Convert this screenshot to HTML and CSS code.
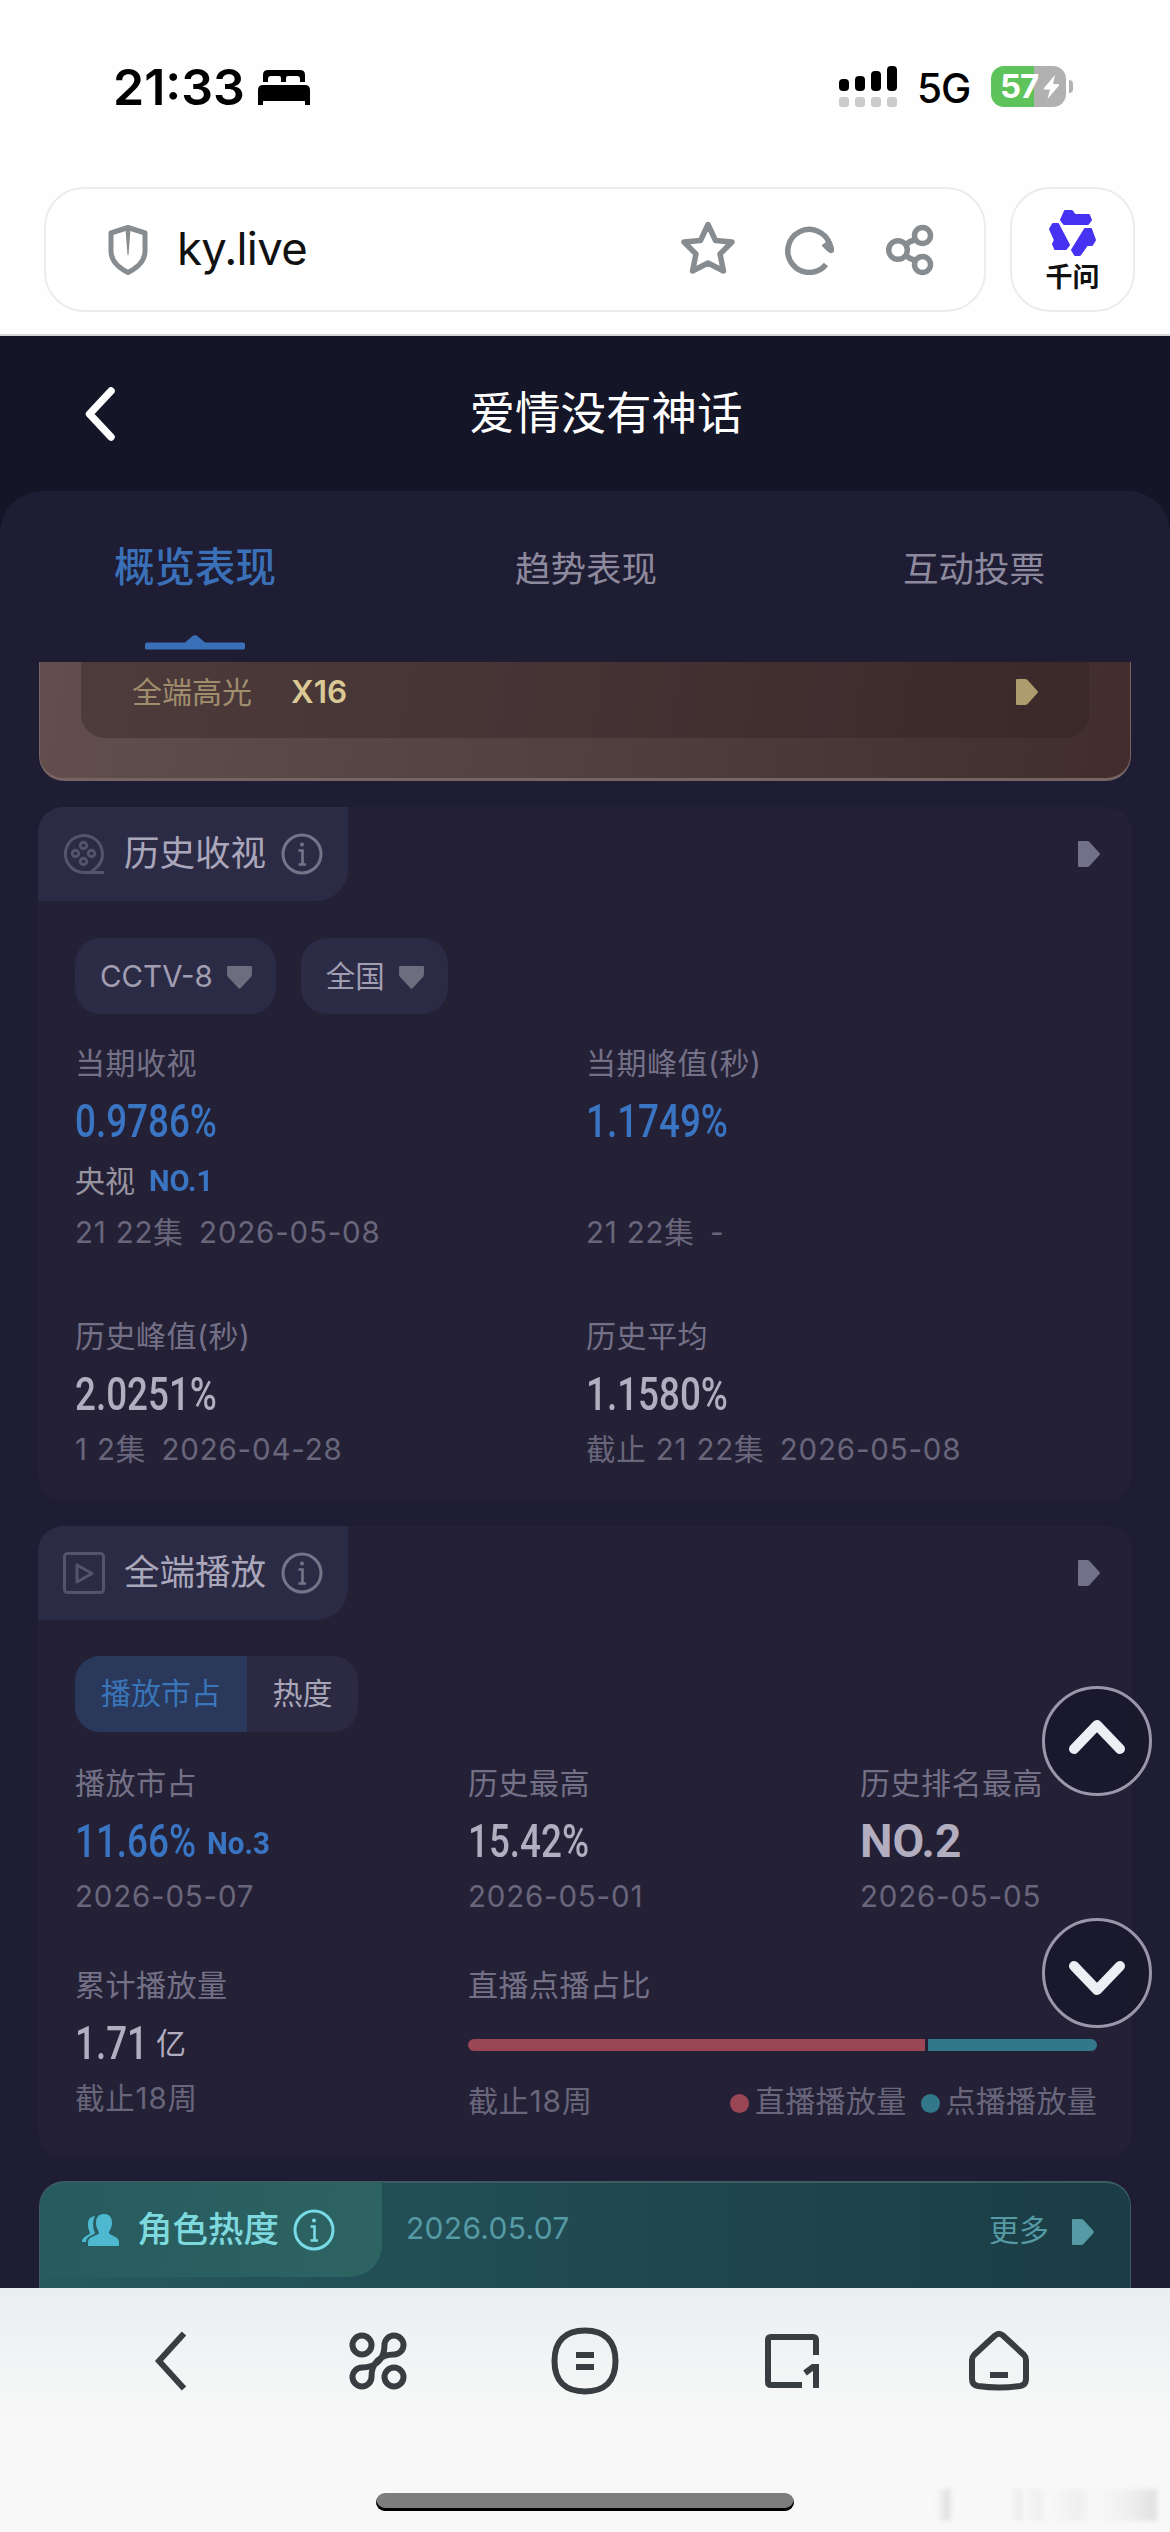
FILE: index.html
```html
<!DOCTYPE html>
<html lang="zh-CN">
<head>
<meta charset="utf-8">
<title>爱情没有神话</title>
<link rel="stylesheet" href="styles.css">
</head>
<body>
<svg class="defs" width="0" height="0">
  <symbol id="arrow" viewBox="0 0 22 26"><path d="M1 0H9Q10.500 0 11.500 1L21.500 12Q22.300 13 21.500 14L11.500 25Q10.500 26 9 26H1Q0 26 0 25V1Q0 0 1 0Z" fill="currentColor"/></symbol>
  <symbol id="down" viewBox="0 0 26 24"><path d="M1 0H25Q26 0 26 1V8Q26 10 25 11.500L14 23.300Q13 24 12 23.300L1 11.500Q0 10 0 8V1Q0 0 1 0Z" fill="currentColor"/></symbol>
  <symbol id="info" viewBox="0 0 42 42"><circle cx="21" cy="21" r="19" fill="none" stroke="currentColor" stroke-width="3"/><circle cx="21" cy="11.500" r="2" fill="currentColor"/><path d="M17.500 17.500H21.500V31M17.500 31.500H25" fill="none" stroke="currentColor" stroke-width="2.600"/></symbol>
</svg>

<header class="status">
  <div class="clock">21:33</div>
  <svg class="bed" width="52" height="36" viewBox="0 0 52 36"><path d="M5 12V5Q5 0 10 0H42Q47 0 47 5V12H42V9Q42 6 39 6H30Q28 6 28 8V12H23V8Q23 6 21 6H13Q10 6 10 9V12Z"/><path d="M0 35V20Q0 15 5 15H47Q52 15 52 20V35H47V31H5V35Z"/></svg>
  <svg class="signal" width="58" height="41" viewBox="0 0 58 41"><g fill="#000"><rect y="13" width="10" height="12" rx="4"/><rect x="16" y="10" width="10" height="15" rx="4"/><rect x="32" y="5" width="10" height="20" rx="4"/><rect x="48" width="10" height="25" rx="4"/></g><g fill="#cbcbcb"><rect y="31" width="10" height="10" rx="3"/><rect x="16" y="31" width="10" height="10" rx="3"/><rect x="32" y="31" width="10" height="10" rx="3"/><rect x="48" y="31" width="10" height="10" rx="3"/></g></svg>
  <div class="net">5G</div>
  <div class="battery"><span>57</span><svg width="17" height="26" viewBox="0 0 17 26"><path d="M12 1L1 14Q0 15.500 2 15.500H7L4.500 25L16 11.500Q17 10 15 10H10L12 1Z" fill="#fff"/></svg></div>
  <i class="nub"></i>
</header>

<div class="address">
  <div class="urlbox">
    <svg width="40" height="52" viewBox="0 0 40 52"><path d="M20 3.500L37 9V27Q37 40 20 48.500Q3 40 3 27V9Z" fill="none" stroke="#868c8f" stroke-width="5" stroke-linejoin="round"/><path d="M17.500 5H22.500L20.500 31H19.500Z" fill="#868c8f"/></svg>
    <span class="url">ky.live</span>
    <svg class="star" width="56" height="54" viewBox="0 0 56 54"><path d="M28 3.500L35.500 19.500L52 21L40 33L43.500 50L28 42L12.500 50L16 33L4 21L20.500 19.500Z" fill="none" stroke="#868c8f" stroke-width="5.500" stroke-linejoin="round"/></svg>
    <svg class="reload" width="50" height="50" viewBox="0 0 50 50"><path d="M41 39.500A21.500 21.500 0 1 1 45 20" fill="none" stroke="#868c8f" stroke-width="5.500"/><path d="M37 20L45 14Q50 22 49 26.500Q46 30 42 26L37 21Z" fill="#868c8f"/></svg>
    <svg width="50" height="52" viewBox="0 0 50 52" fill="none" stroke="#868c8f" stroke-width="5.500"><circle cx="13" cy="26" r="9.300"/><circle cx="37.500" cy="11.500" r="8"/><circle cx="37.500" cy="40.500" r="8"/><path d="M21 21Q24 17 30 16M21 31Q24 35 30 36"/></svg>
  </div>
  <div class="assistant">
    <svg width="48" height="48" viewBox="0 0 48 48" fill="#4633f2" stroke="#4633f2" stroke-width="2" stroke-linejoin="round"><path d="M16 2H23L26 6H40L42 11L39 15H15L12 11Z"/><path d="M4 15H9L20 36L17 40H6L4 35L6 31L1 20Z"/><path d="M36 20H42L46 31L43 36H38L31 46H26L23 41Z"/></svg>
    <b>千问</b>
  </div>
</div>

<div class="page">
  <header class="title"><svg width="34" height="54" viewBox="0 0 34 54"><path d="M29 4L7.500 27L29 50" fill="none" stroke="#fff" stroke-width="7.500" stroke-linecap="round" stroke-linejoin="round"/></svg><h1>爱情没有神话</h1></header>
  <main>
    <nav class="tabs">
      <a class="tab on">概览表现<svg width="100" height="15" viewBox="0 0 100 15"><path d="M2 7.500H40L47 1.500Q50-1 53 1.500L60 7.500H98Q100 7.500 100 9V13Q100 14.500 98 14.500H2Q0 14.500 0 13V9Q0 7.500 2 7.500Z" fill="#3a70b8"/></svg></a>
      <a class="tab">趋势表现</a><a class="tab">互动投票</a>
    </nav>
    <section class="gold"><div class="gold-row"><span>全端高光</span><b>X16</b><svg class="arrow"><use href="#arrow"/></svg></div></section>

    <section class="card ratings">
      <div class="head">
        <h2><svg width="42" height="42" viewBox="0 0 42 42" fill="none" stroke="currentColor" stroke-width="3"><path d="M21 39.500A18.500 18.500 0 1 1 35 33Q31 37 27 39.500H41H21"/><circle cx="20.500" cy="12.500" r="3.200"/><circle cx="20.500" cy="28.500" r="3.200"/><circle cx="12.500" cy="20.500" r="3.200"/><circle cx="28.500" cy="20.500" r="3.200"/></svg><span>历史收视</span><svg class="info"><use href="#info"/></svg></h2>
        <svg class="arrow"><use href="#arrow"/></svg>
      </div>
      <div class="pills"><div class="pill">CCTV-8<svg><use href="#down"/></svg></div><div class="pill">全国<svg><use href="#down"/></svg></div></div>
      <div class="grid two">
        <div class="cell ranked"><p class="label">当期收视</p><p class="value blue"><span>0.9786%</span></p><p class="rank">央视<b>NO.1</b></p><p class="date">21 22集&ensp;2026-05-08</p></div>
        <div class="cell ranked"><p class="label">当期峰值(秒)</p><p class="value blue"><span>1.1749%</span></p><p class="rank"></p><p class="date">21 22集&ensp;-</p></div>
        <div class="cell"><p class="label">历史峰值(秒)</p><p class="value"><span>2.0251%</span></p><p class="date">1 2集&ensp;2026-04-28</p></div>
        <div class="cell"><p class="label">历史平均</p><p class="value"><span>1.1580%</span></p><p class="date">截止 21 22集&ensp;2026-05-08</p></div>
      </div>
    </section>

    <section class="card plays">
      <div class="head">
        <h2><svg width="42" height="42" viewBox="0 0 42 42" fill="none" stroke="currentColor" stroke-width="3" stroke-linejoin="round"><rect x="1.500" y="1.500" width="39" height="39" rx="3"/><path d="M14 13V30L29 21.500Z"/></svg><span>全端播放</span><svg class="info"><use href="#info"/></svg></h2>
        <svg class="arrow"><use href="#arrow"/></svg>
      </div>
      <div class="toggle"><span class="on">播放市占</span><span>热度</span></div>
      <div class="grid three">
        <div class="cell"><p class="label">播放市占</p><p class="value blue"><span class="share">11.66%</span><b class="no">No.3</b></p><p class="date">2026-05-07</p></div>
        <div class="cell"><p class="label">历史最高</p><p class="value"><span>15.42%</span></p><p class="date">2026-05-01</p></div>
        <div class="cell"><p class="label">历史排名最高</p><p class="value"><span class="best">NO.2</span></p><p class="date">2026-05-05</p></div>
        <div class="cell"><p class="label">累计播放量</p><p class="value"><span class="total">1.71</span><em>亿</em></p><p class="date">截止18周</p></div>
        <div class="cell ratio"><p class="label">直播点播占比</p><div class="bar"><i class="live"></i><i class="vod"></i></div><div class="legend"><span class="until">截止18周</span><i class="dot red"></i><span>直播播放量</span><i class="dot teal"></i><span>点播播放量</span></div></div>
      </div>
    </section>

    <section class="roles">
      <h2><svg width="40" height="33" viewBox="0 0 40 33" fill="#4fb8d1"><path d="M23 0C29 0 31 4 31 9C31 14 28 17 28 19C29 22 38 22 38 28V32H7V28C7 22 17 22 18 19C18 17 15 14 15 9C15 4 17 0 23 0Z"/><path d="M14 2C8 3 7 6 7 11C7 16 9 17 9 19C8 22 1 22 1 28H5C5 22 13 21 14 19C12 15 11 7 14 2Z"/></svg><span>角色热度</span><svg class="info"><use href="#info"/></svg></h2>
      <time>2026.05.07</time><span class="more">更多</span><svg class="arrow"><use href="#arrow"/></svg>
    </section>
    <div class="float up"><svg width="60" height="42" viewBox="0 0 60 42"><path d="M7 33L30 9L53 33" fill="none" stroke="#eeeef5" stroke-width="10" stroke-linecap="round" stroke-linejoin="round"/></svg></div>
    <div class="float down"><svg width="60" height="42" viewBox="0 0 60 42"><path d="M7 9L30 33L53 9" fill="none" stroke="#eeeef5" stroke-width="10" stroke-linecap="round" stroke-linejoin="round"/></svg></div>
  </main>
</div>

<footer class="toolbar">
  <div class="tools">
    <svg viewBox="0 0 70 70"><path d="M48 7.500L23 35L48 62.500" fill="none"/></svg>
    <svg viewBox="0 0 70 70" fill="none"><circle cx="19" cy="19" r="9.500"/><circle cx="51" cy="51" r="9.500"/><path d="M41.500 19A9.500 9.500 0 1 1 51 28.500C37 28.500 28.500 37 28.500 51A9.500 9.500 0 1 1 19 41.500C33 41.500 41.500 33 41.500 19Z"/></svg>
    <svg viewBox="0 0 70 70" fill="none"><path d="M35 4.500C55 4.500 65.500 15 65.500 35S55 65.500 35 65.500S4.500 55 4.500 35S15 4.500 35 4.500Z"/><path d="M26 29H44M26 41H44"/></svg>
    <svg viewBox="0 0 70 70" fill="none"><path d="M45 59H14Q11 59 11 56V14Q11 11 14 11H56Q59 11 59 14V29"/><path d="M48 47L56 41H59V62"/></svg>
    <svg viewBox="0 0 70 70" fill="none"><path d="M31 9.500Q35 6 39 9.500L60 29Q62 31 62 34V53Q62 59 56 60Q35 63 14 60Q8 59 8 53V34Q8 31 10 29Z"/><path d="M26 49H44"/></svg>
  </div>
  <div class="home-bar"></div>
  <div class="smudge"></div>
</footer>
</body>
</html>
```
FILE: styles.css
```css
* { box-sizing: border-box; margin: 0; padding: 0; }
body {
  width: 1170px; height: 2532px; overflow: hidden; background: #fefefe;
  display: flex; flex-direction: column;
  font-family: Inter, "Noto Sans CJK SC", sans-serif; line-height: 1.3; color: #000;
}
svg { display: block; flex: none; }
.defs { position: absolute; }

.status { height: 187px; padding: 62px 97px 0 113px; display: flex; align-items: flex-start; }
.clock { font-size: 50px; font-weight: 600; line-height: 50px; width: 145px; white-space: nowrap; }
.bed { margin-top: 8px; }
.signal { margin: 4px 20px 0 auto; }
.net { font-size: 40.500px; font-weight: 500; line-height: 54px; width: 74px; white-space: nowrap; letter-spacing: -1px; }
.battery {
  margin: 4px 0 0 0; width: 75px; height: 41px; border-radius: 13px; padding: 0 6px 0 9px;
  background: linear-gradient(90deg, #5fc35b 57.500%, #b1b1b1 57.500%);
  display: flex; align-items: center; justify-content: space-between;
  color: #fff; font-size: 33px; font-weight: 700; letter-spacing: -1px;
}
.nub { width: 4px; height: 13px; margin: 18px 0 0 3px; border-radius: 0 4px 4px 0; background: #b1b1b1; }

.address { height: 149px; padding-left: 44px; display: flex; gap: 24px; border-bottom: 2px solid #d5d5da; }
.urlbox, .assistant { height: 125px; border: 2px solid #ececec; border-radius: 40px; background: #fff; }
.urlbox { width: 942px; padding: 0 49px 0 62px; display: flex; align-items: center; }
.url { margin-left: 29px; font-size: 45.500px; letter-spacing: -.7px; line-height: 60px; padding-bottom: 1px; color: #111; }
.star { margin: -4px 0 0 auto; }
.reload { margin: 0 50px 0 49px; }
.assistant { width: 125px; padding-top: 20px; display: flex; flex-direction: column; align-items: center; }
.assistant b { font-size: 27px; line-height: 36px; margin-top: 3px; color: #111; }

.page { height: 1952px; background: #151528; overflow: hidden; flex: none; }
.title { height: 155px; display: flex; align-items: center; padding: 0 0 0 82px; }
.title h1 { width: 938px; text-align: center; font-size: 45.500px; font-weight: 400; color: #fff; margin-left: 21px; }
main { position: relative; height: 1797px; background: #1f1d33; border-radius: 42px 42px 0 0; padding: 0 39px; }
.tabs { height: 171px; display: flex; justify-content: space-between; padding: 50px 86px 0 75px; }
.tab { position: relative; height: 58px; line-height: 58px; font-size: 35.500px; color: #8d8a9e; }
.tab.on { width: 240px; margin-right: -85px; font-size: 40.500px; font-weight: 500; color: #3a70b8; line-height: 54px; }
.tab.on svg { position: absolute; left: 31px; top: 94px; }

.gold {
  height: 119px; padding: 0 41px; border-radius: 0 0 25px 25px; border: solid #766363; border-width: 0 1px 3px;
  background: linear-gradient(100deg, #624f4d, #50403f 50%, #402d2c);
}
.gold-row { height: 76px; border-radius: 0 0 24px 24px; background: #32202466; padding: 0 51px 16px; display: flex; align-items: center; color: #a08d6e; font-size: 30px; }
.gold-row b { margin-left: 39px; color: #dac895; font-weight: 600; font-size: 31.500px; }
.arrow { width: 22px; height: 26px; margin-left: auto; color: #72718a; }
.gold-row .arrow { color: #af9c6e; }

.card { background: #242137; border-radius: 25px; margin: 0 -1px; color: #b4b0c3; }
.ratings { margin-top: 26px; height: 693px; }
.plays { margin-top: 26px; height: 631px; }
.head { height: 94px; display: flex; padding-right: 32px; }
.head h2 { width: 310px; height: 94px; background: #2c2b46; border-radius: 25px 0 32px 0; padding: 0 26px 0 25px; display: flex; align-items: center; color: #55536d; }
.head h2 span { margin: 0 15px 0 19px; font-size: 35.500px; font-weight: 400; color: #aaa7bb; white-space: nowrap; }
.info { width: 42px; height: 42px; color: #777489; }
.head .arrow { margin-top: 34px; }
.pills { display: flex; gap: 25px; padding: 37px 0 0 37px; }
.pill { height: 76px; border-radius: 26px; background: #2c2b46; display: flex; align-items: center; gap: 14px; padding: 0 24px 0 25px; font-size: 29.500px; color: #a19eb2; }
.pill svg { width: 25px; height: 23px; margin-top: 3px; color: #6d6d7d; }
.grid { display: grid; padding-left: 37px; }
.two { grid-template-columns: 511px 1fr; grid-template-rows: 273px auto; padding-top: 27px; }
.three { grid-template-columns: 393px 392px 1fr; grid-template-rows: 202px auto; padding-top: 29px; }
.label { height: 44px; line-height: 44px; font-size: 30px; letter-spacing: .5px; color: #747187; white-space: nowrap; }
.value { height: 73px; line-height: 73px; font-family: Roboto, "Noto Sans CJK SC", sans-serif; font-size: 46px; font-weight: 500; color: #b2aec0; display: flex; white-space: nowrap; }
.value span { display: block; transform: scaleX(.8); transform-origin: 0 50%; }
.blue, .rank b { color: #3a75c4; }
.rank { height: 46px; line-height: 46px; font-size: 30px; color: #98949f; display: flex; }
.rank b { margin-left: 14px; font-family: Roboto, sans-serif; transform: scaleX(.97); transform-origin: 0 50%; }
.date { height: 56px; line-height: 56px; margin-top: -10px; font-size: 29.500px; letter-spacing: .8px; color: #69667b; font-weight: 400; white-space: nowrap; }
.ranked .date { margin-top: 0; }
.toggle { margin: 36px 0 0 37px; width: 283px; height: 76px; border-radius: 25px; overflow: hidden; background: #2c2a42; display: flex; font-size: 30px; line-height: 74px; color: #aaa6b9; }
.toggle span { width: 111px; text-align: center; }
.toggle .on { width: 172px; background: #29385b; color: #3a75b9; }
.value .share { width: 132px; }
.value .no { font-size: 31px; line-height: 77px; transform: scaleX(.95); transform-origin: 0 50%; }
.value .best { font-weight: 700; transform: none; }
.value .total { width: 81px; }
.value em { font: 400 30px/73px Inter, "Noto Sans CJK SC", sans-serif; }
.ratio { grid-column: 2 / 4; padding-right: 35px; }
.bar { height: 12px; margin-top: 32px; display: flex; gap: 3px; }
.bar i { height: 12px; }
.live { width: 457px; background: #9a4655; border-radius: 6px 0 0 6px; }
.vod { flex: 1; background: #33778a; border-radius: 0 6px 6px 0; }
.legend { height: 56px; margin-top: 22px; display: flex; align-items: center; font-size: 30px; letter-spacing: .3px; color: #69667b; }
.legend .until { margin-right: auto; letter-spacing: .8px; }
.dot { width: 19px; height: 19px; border-radius: 50%; margin: 4px 6px 0 14px; }
.red { background: #9a4655; }
.teal { background: #33778a; }

.roles { margin-top: 24px; height: 107px; border: solid #3d5c62; border-width: 2px 1px 0; border-radius: 25px 25px 0 0; background: linear-gradient(90deg, #265a5f, #204950 50%, #1b3d45); display: flex; padding-right: 36px; color: #559aa5; font-size: 30px; line-height: 94px; overflow: hidden; }
.roles h2 { width: 342px; height: 94px; border-radius: 0 0 32px 0; background: linear-gradient(110deg, #275a5f, #2d6462); display: flex; align-items: center; padding-left: 41px; color: #7ed9df; font-size: 35.500px; font-weight: 500; }
.roles h2 span { margin: 0 14px 0 16px; }
.roles .info { color: #78dae6; }
.roles time { margin-left: 24px; line-height: 90px; letter-spacing: .3px; }
.more { margin-left: auto; }
.roles .arrow { color: #559aa5; margin: 36px 0 0 23px; }

.float { position: absolute; left: 1042px; width: 110px; height: 110px; border: 3px solid #9a97aa; border-radius: 50%; background: #1a182bf2; display: flex; justify-content: center; align-items: center; }
.up { top: 1195px; padding-bottom: 9px; }
.float.down { top: 1427px; padding-top: 9px; }

.toolbar { position: relative; height: 244px; background: linear-gradient(#e9eef0, #f0f3f4 25%, #f8f8f8 55%); padding-top: 38px; }
.tools { display: flex; padding: 0 136px; justify-content: space-between; }
.tools svg { width: 70px; height: 70px; stroke: #383d41; stroke-width: 6; fill: none; }
.home-bar { width: 418px; height: 18px; margin: 97px auto 0; border-radius: 9px; background: #7d7d7d; box-shadow: inset 0 -3px #000; }
.smudge { position: absolute; right: 12px; bottom: 11px; width: 222px; height: 32px; filter: blur(2px); opacity: .8; background: linear-gradient(90deg, transparent, #dadada 5%, transparent 8%, transparent 34%, #e8e8e8 37%, transparent 40%, #ececec 46%, transparent 50%, #ededed 65%, transparent 70%, #eeeeee 86%, #dddddd 99%, transparent); }
```
